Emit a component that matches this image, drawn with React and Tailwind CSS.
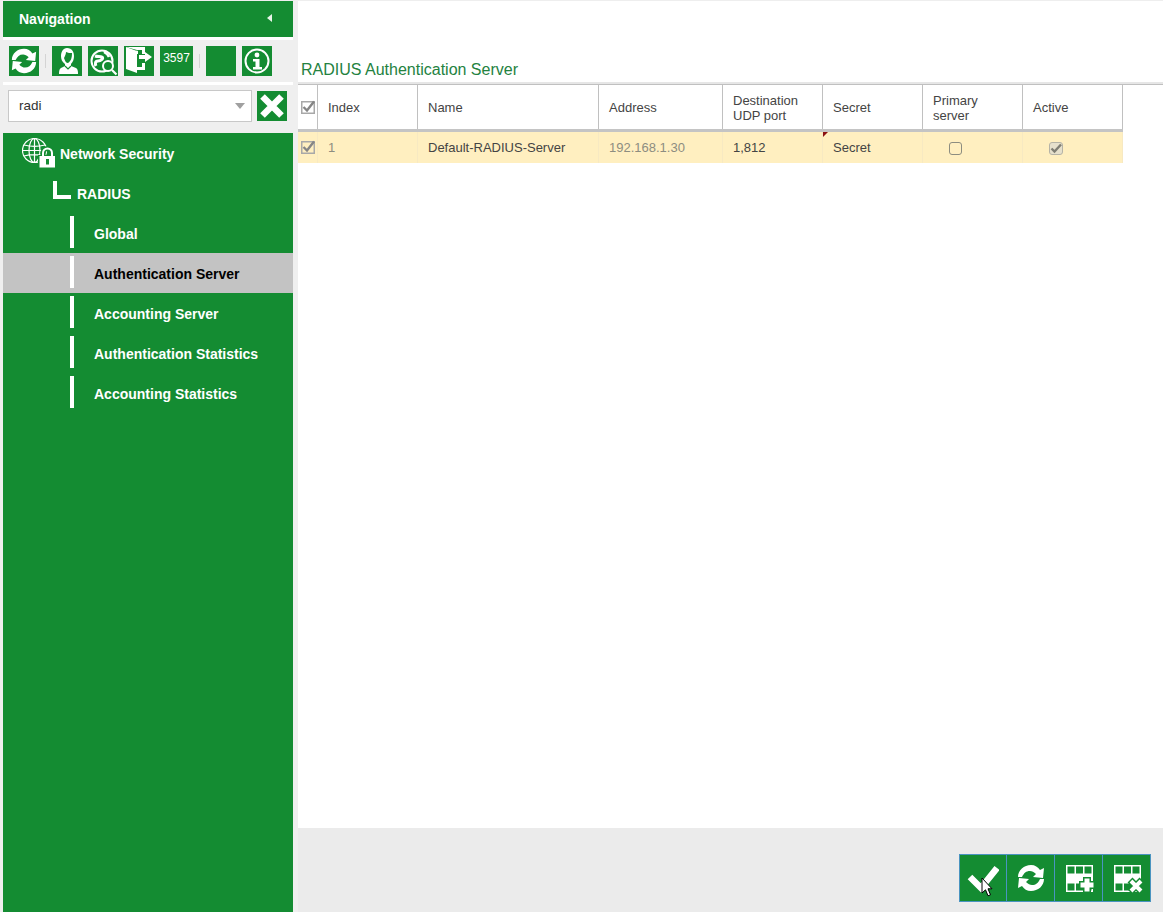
const GREEN = 'bg-[#148c32]';

const RefreshIcon = ({ size = 28 }) => (
  <svg width={size} height={size} viewBox="0 0 30 30" fill="#fff">
    <path d="M2 14C2 7 8 2 15 2c4 0 7 2 9 5l4-2-1 10-10-1 3-3c-2-2-4-3-6-3-4 0-6 2-8 6z" />
    <path d="M28 16c0 7-6 12-13 12-4 0-7-2-9-5l-4 2 1-10 10 1-3 3c2 2 4 3 6 3 4 0 6-2 8-6z" />
  </svg>
);

const UserIcon = () => (
  <svg width="30" height="30" viewBox="0 0 30 30">
    <path d="M15 2c5 0 7 4 7 8 0 3-1 6-3 8v2l5 2c2 1 2 4 2 6H7c0-2 0-5 2-6l4-2v-2c-3-2-4-5-4-8 0-4 2-8 6-8z" fill="#fff" />
    <path d="M14 6c2 1 4 1 6 1 0 5-1 8-4 10-2 0-3-2-4-5 1-2 2-4 2-6z" fill="#148c32" />
    <path d="M13 20l3 3 3-3" fill="none" stroke="#148c32" strokeWidth="1.2" />
  </svg>
);

const GlobeSearchIcon = () => (
  <svg width="30" height="30" viewBox="0 0 30 30" fill="none" stroke="#fff" strokeWidth="2">
    <circle cx="14" cy="15" r="10.5" />
    <path d="M7 10c3 1 5 0 7 1s-1 4-4 4-3 3-2 5" strokeWidth="3" />
    <path d="M16 6c2 1 4 2 5 5" strokeWidth="2.5" />
    <circle cx="20" cy="20" r="5" fill="#148c32" />
    <path d="M24 24l4.5 4.5" strokeWidth="2.2" />
  </svg>
);

const LogoutIcon = () => (
  <svg width="30" height="30" viewBox="0 0 30 30" fill="#fff">
    <path d="M2 1h19v7h-3V4h-6l2 1v3h-1V4z" />
    <path d="M2 1l11 4v22L2 23z" />
    <path d="M13 21h5v-4h3v7h-8z" />
    <path d="M15 9h6V6l7 5-7 5v-3h-6z" />
  </svg>
);

const InfoIcon = () => (
  <svg width="26" height="26" viewBox="0 0 26 26">
    <circle cx="13" cy="13" r="11.5" fill="none" stroke="#fff" strokeWidth="2" />
    <circle cx="13" cy="7" r="2.4" fill="#fff" />
    <path d="M9 11h6.5v8H18v2.5H9V19h2.5v-5.5H9z" fill="#fff" />
  </svg>
);

const CloseIcon = () => (
  <svg width="24" height="24" viewBox="0 0 24 24" stroke="#fff" strokeWidth="6.5">
    <path d="M2.5 2.5l19 19M21.5 2.5l-19 19" />
  </svg>
);

const GlobeLockIcon = () => (
  <svg width="34" height="30" viewBox="0 0 34 30" fill="none" stroke="#fff" strokeWidth="1.2">
    <circle cx="12.5" cy="12.5" r="12" />
    <ellipse cx="12.5" cy="12.5" rx="5.5" ry="12" />
    <path d="M12.5 .5v24M2 7c6 1.5 15 1.5 21 0M2 18c6-1.5 15-1.5 21 0M.5 12.5h24" />
    <path d="M21 19v-4a4.5 4.5 0 0 1 9 0v4" stroke="#148c32" strokeWidth="5" />
    <rect x="16" y="17" width="18" height="13" fill="#148c32" stroke="none" />
    <path d="M21 19v-4a4.5 4.5 0 0 1 9 0v4" strokeWidth="2" />
    <rect x="17.5" y="18" width="15.5" height="11.5" fill="#fff" stroke="none" />
    <rect x="24" y="21" width="3" height="5.5" fill="#148c32" stroke="none" />
  </svg>
);

const GridIcon = ({ mark }) => (
  <svg width="32" height="30" viewBox="0 0 32 30">
    <rect x="3" y="2" width="27" height="27" fill="#fff" />
    <path d="M4.5 3.5h7v7h-7zM13 3.5h7v7h-7zM21.5 3.5h7v7h-7zM4.5 20.5h7v7h-7zM13 20.5h7v7h-7zM21.5 20.5h7v7h-7z" fill="#148c32" />
    {mark === 'plus' ? (
      <>
        <path d="M24 14v16M16 22h16" stroke="#148c32" strokeWidth="8" />
        <path d="M24 15.5v13M17.5 22h13" stroke="#fff" strokeWidth="5" />
      </>
    ) : (
      <>
        <path d="M19 17l12 12M31 17L19 29" stroke="#148c32" strokeWidth="7" />
        <path d="M20 18l10 10M30 18L20 28" stroke="#fff" strokeWidth="4" />
      </>
    )}
  </svg>
);

const ToolButton = ({ children, className = 'w-[30px]' }) => (
  <div className={`${GREEN} ${className} h-[30px] flex items-center justify-center shrink-0`}>{children}</div>
);

const Sep = () => <div className="w-px h-[14px] bg-[#d4d4d4] mx-[6px] shrink-0" />;

const TreeItem = ({ label, active }) => (
  <div className={`h-10 flex items-center pl-[67px] ${active ? 'bg-[#c3c3c3] text-black' : 'text-white'}`}>
    <div className="w-1 h-8 bg-white mr-5 -mt-[2px]" />
    <span className="text-sm font-bold mt-[2px]">{label}</span>
  </div>
);

const HeadCell = ({ className, pad = 'pl-[10px]', children }) => (
  <div className={`${className} ${pad} h-full pt-px flex items-center border-r border-[#c0c0c0] leading-[15px] shrink-0`}>
    {children}
  </div>
);

const RowCell = ({ className, pad = 'pl-[10px]', children }) => (
  <div className={`${className} ${pad} h-full flex items-center border-r border-[#f7e9c2] shrink-0`}>{children}</div>
);

const TickBox = () => (
  <svg width="14" height="15" viewBox="0 0 14 15" fill="none" className="-mt-[3px]">
    <rect x=".75" y="2.75" width="12.5" height="11.5" stroke="#a8a8a8" strokeWidth="1.5" />
    <path d="M2.5 8l3.5 3.5L13 2.5" stroke="#858585" strokeWidth="2.4" />
  </svg>
);

const ActionButton = ({ className = 'w-[47px]', children }) => (
  <div className={`${GREEN} ${className} h-[46px] flex items-center justify-center relative`}>{children}</div>
);

export default function App() {
  return (
    <div className="w-[1163px] h-[915px] flex bg-white overflow-hidden text-[13px] text-[#444] font-['Liberation_Sans',Arial,sans-serif]">
      <aside className="w-[298px] h-[912px] pl-[3px] pr-[5px] bg-[#efefef] flex flex-col shrink-0">
        <div className={`${GREEN} h-[36px] mt-px flex items-center justify-between pl-4 pr-[21px] text-white`}>
          <span className="text-sm font-bold">Navigation</span>
          <svg width="5" height="8" viewBox="0 0 5 8" fill="#e8f5ea" className="-mt-[3px]"><path d="M5 0v8L0 4z" /></svg>
        </div>
        <div className="h-[3px] bg-white" />
        <div className="h-[42px] flex items-center pl-[6px]">
          <ToolButton><RefreshIcon /></ToolButton>
          <Sep />
          <ToolButton><UserIcon /></ToolButton>
          <div className="w-[6px]" />
          <ToolButton><GlobeSearchIcon /></ToolButton>
          <div className="w-[6px]" />
          <ToolButton><LogoutIcon /></ToolButton>
          <div className="w-[6px]" />
          <ToolButton className="w-[33px]">
            <span className="text-white text-xs -mt-[7px]">3597</span>
          </ToolButton>
          <Sep />
          <ToolButton />
          <div className="w-[6px]" />
          <ToolButton><InfoIcon /></ToolButton>
        </div>
        <div className="h-[3px] bg-white" />
        <div className="h-[48px] flex items-start pl-[5px] pt-[5px] gap-[5px]">
          <div className="w-[244px] h-[32px] bg-white border border-[#c8c8c8] flex items-center justify-between pl-[10px] pr-[6px] text-[#333] text-[13.5px]">
            <span>radi</span>
            <div className="w-0 h-0 border-x-[5px] border-x-transparent border-t-[6px] border-t-[#a0a0a0]" />
          </div>
          <ToolButton className="w-[30px] mt-px"><CloseIcon /></ToolButton>
        </div>
        <div className={`${GREEN} flex-1 flex flex-col`}>
          <div className="h-10 flex items-center pl-[19px] text-white">
            <GlobeLockIcon />
            <span className="text-sm font-bold ml-1 mt-px">Network Security</span>
          </div>
          <div className="h-10 flex items-center pl-[50px] text-white">
            <div className="w-[18px] h-[18px] border-l-[4px] border-b-[4px] border-white -mt-[6px]" />
            <span className="text-sm font-bold ml-[6px] mt-px">RADIUS</span>
          </div>
          <TreeItem label="Global" />
          <TreeItem label="Authentication Server" active />
          <TreeItem label="Accounting Server" />
          <TreeItem label="Authentication Statistics" />
          <TreeItem label="Accounting Statistics" />
        </div>
      </aside>

      <main className="flex-1 h-[912px] flex flex-col border-t border-[#eee]">
        <div className="h-[81px] flex items-end pl-[3px] pb-[2px] text-base text-[#24823f] leading-5">
          RADIUS Authentication Server
        </div>
        <div className="h-[2px] bg-[#e6e6e6]" />
        <div className="h-px bg-[#c0c0c0] w-full" />
        <div className="flex-1 flex flex-col">
          <div className="w-[825px] h-[47px] flex border-b-[3px] border-[#c4c4c4]">
            <HeadCell className="w-[20px]" pad="pl-[3px]"><TickBox /></HeadCell>
            <HeadCell className="w-[100px]">Index</HeadCell>
            <HeadCell className="w-[181px]">Name</HeadCell>
            <HeadCell className="w-[124px]">Address</HeadCell>
            <HeadCell className="w-[100px]">Destination<br />UDP port</HeadCell>
            <HeadCell className="w-[100px]">Secret</HeadCell>
            <HeadCell className="w-[100px]">Primary<br />server</HeadCell>
            <HeadCell className="w-[100px]">Active</HeadCell>
          </div>
          <div className="w-[825px] h-[31px] flex bg-[#ffefc0] text-[#444]">
            <RowCell className="w-[20px]" pad="pl-[3px]"><TickBox /></RowCell>
            <RowCell className="w-[100px] text-[#8d8d80]">1</RowCell>
            <RowCell className="w-[181px]">Default-RADIUS-Server</RowCell>
            <RowCell className="w-[124px] text-[#8d8d80]">192.168.1.30</RowCell>
            <RowCell className="w-[100px]">1,812</RowCell>
            <RowCell className="w-[100px] relative">
              <div className="absolute left-0 top-0 w-0 h-0 border-t-[5px] border-t-[#8b1010] border-r-[5px] border-r-transparent" />
              Secret
            </RowCell>
            <RowCell className="w-[100px]" pad="pl-[26px]">
              <div className="w-[13px] h-[13px] rounded-[3px] border border-[#8d8d80] mt-px" />
            </RowCell>
            <RowCell className="w-[100px]" pad="pl-[26px]">
              <div className="w-[14px] h-[13px] rounded-[3px] bg-[#e6e0cc] border border-[#b5b3a6] flex items-center justify-center mt-px">
                <svg width="12" height="11" viewBox="0 0 12 11" fill="none" stroke="#7f7e74" strokeWidth="2.4">
                  <path d="M1.5 5.5l3 3L11 1.5" />
                </svg>
              </div>
            </RowCell>
          </div>
        </div>
        <div className="h-[84px] bg-[#ebebeb] flex items-start justify-end pr-3 pt-[26px] shrink-0">
          <div className="flex border border-[#4a94c0] bg-[#4a94c0] gap-px">
            <ActionButton className="w-[46px]">
              <svg width="32" height="30" viewBox="0 0 32 30" fill="none" stroke="#fff" strokeWidth="6.5">
                <path d="M3 14l11 11L30 5" />
              </svg>
              <svg width="12" height="20" viewBox="0 0 12 20" className="absolute left-[21px] top-[22px]">
                <path d="M1 1v15l3.5-3.2 2.5 6 2.5-1-2.5-6H11z" fill="#fff" stroke="#000" strokeWidth="1" />
              </svg>
            </ActionButton>
            <ActionButton><RefreshIcon size={30} /></ActionButton>
            <ActionButton><GridIcon mark="plus" /></ActionButton>
            <ActionButton><GridIcon mark="x" /></ActionButton>
          </div>
        </div>
      </main>
    </div>
  );
}
